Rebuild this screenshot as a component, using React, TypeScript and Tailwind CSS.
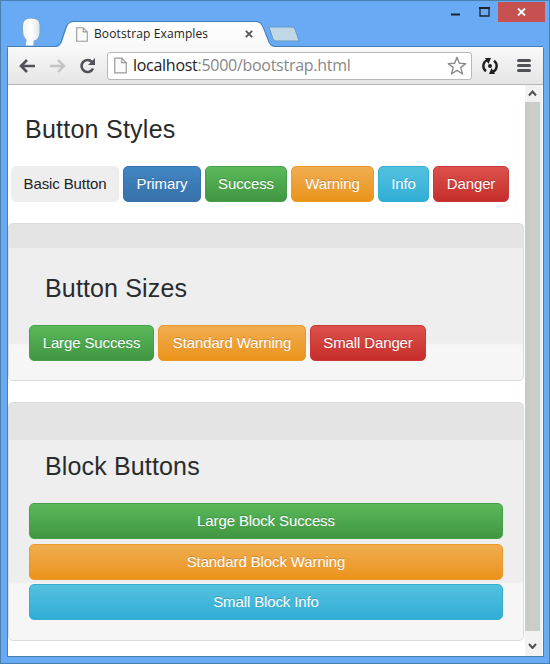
import React from "react";

const variants = {
  basic: "bg-[#eeeeee] text-[#222222] border-[#eeeeee]",
  primary: "bg-linear-to-b from-[#4086c3] to-[#3871a9] text-white border-[#3874ab] [text-shadow:0_-1px_0_#00000030]",
  success: "bg-linear-to-b from-[#5ab95b] to-[#419641] text-white border-[#45a047] [text-shadow:0_-1px_0_#00000030]",
  warning: "bg-linear-to-b from-[#f0ad4e] to-[#eb9316] text-white border-[#ea9a2b] [text-shadow:0_-1px_0_#00000030]",
  info: "bg-linear-to-b from-[#53c1df] to-[#2faed5] text-white border-[#36aed1] [text-shadow:0_-1px_0_#00000030]",
  danger: "bg-linear-to-b from-[#dc504c] to-[#c62d2a] text-white border-[#c93a37] [text-shadow:0_-1px_0_#00000030]",
};

function Button({ kind, width, children }: { kind: keyof typeof variants; width: string; children: string }) {
  return (
    <button className={`h-9 shrink-0 whitespace-nowrap rounded-[5px] border text-[15px] leading-[34px] tracking-[-0.12px] ${variants[kind]} ${width}`}>
      {children}
    </button>
  );
}

function PageIcon({ className }: { className: string }) {
  return (
    <svg className={className} viewBox="0 0 12 15" fill="#fafafa" stroke="#999" strokeWidth="1.1">
      <path d="M.7.7h6.5l4.1 4.2v9.4H.7zM7.2.7v4.2h4.1" />
    </svg>
  );
}

function TitleBar() {
  return (
    <header className="relative flex h-[47px] shrink-0 items-start">
      <svg className="absolute inset-0" width="550" height="47" viewBox="0 0 550 47">
        <defs>
          <linearGradient id="tab" x2="0" y2="1"><stop stopColor="#fff" /><stop offset="1" stopColor="#f8f8f8" /></linearGradient>
          <linearGradient id="head" x2="1"><stop stopColor="#f0f5f3" /><stop offset=".5" stopColor="#fff" /><stop offset="1" stopColor="#dce5e7" /></linearGradient>
        </defs>
        <path d="M25 46L26 40Q22 36 22.500 30V25Q23 18 31 18Q40 18 40 25V33Q39 40 34 41V46z" fill="url(#head)" stroke="#76a5cd" />
        <path d="M7 47H56Q60 47 62 42L67 27Q69 22 73 22H256Q261 22 263 27L269 43Q271 47 275 47z" fill="url(#tab)" />
        <path d="M7 46.5H55Q59 46 61 42L66 27Q68 22 73 21.500H257Q261 22 263 27L269 42Q270 46 275 46.500H543" fill="none" stroke="#437fb6" />
        <path d="M269 27H291Q294 27 295 29L299 41H276Q274 41 273 39z" fill="#c0d7e6" stroke="#6599c7" />
      </svg>
      <div className="relative ml-[76px] mt-[24px] flex h-5 w-[180px] items-center">
        <PageIcon className="h-[15px] w-3" />
        <span className="ml-[6px] w-[118px] whitespace-nowrap font-['Open_Sans',sans-serif] text-[12px] tracking-[0.12px] text-[#222]">Bootstrap Examples</span>
        <svg className="ml-auto mr-[3px]" width="8" height="8" viewBox="0 0 8 8" stroke="#555" strokeWidth="1.8"><path d="M.8.8l6.4 6.400M7.200.8L.8 7.200" /></svg>
      </div>
      <div className="relative ml-auto mr-[5px] mt-[2px] flex h-5 items-center">
        <svg width="10" height="20" className="mr-[18px]"><path d="M0 12.500H9" stroke="#20242c" strokeWidth="2" /></svg>
        <svg width="11" height="20" className="mr-[8px]"><path d="M1 6h9v8H1z" fill="none" stroke="#20242c" strokeWidth="1.300" /><path d="M0 6h11" stroke="#20242c" strokeWidth="2" /></svg>
        <div className="flex h-5 w-[47px] items-center justify-center bg-[#c75050]">
          <svg width="9" height="8" viewBox="0 0 9 8" stroke="white" strokeWidth="1.800"><path d="M1 .5l7 7M8 .5l-7 7" /></svg>
        </div>
      </div>
    </header>
  );
}

function Toolbar() {
  return (
    <nav className="flex h-[38px] shrink-0 items-center border-b border-[#b4b8bc] bg-linear-to-b from-[#f9f9f9] to-[#e5e5e5]">
      <svg className="ml-[11px] shrink-0" width="17" height="14" viewBox="0 0 17 14" fill="none" stroke="#51515a" strokeWidth="2.6"><path d="M16 7H2M8 1L2 7l6 6" /></svg>
      <svg className="ml-[13px] shrink-0" width="17" height="14" viewBox="0 0 17 14" fill="none" stroke="#c3c3c3" strokeWidth="2.4"><path d="M1 7h14M9 1l6 6-6 6" /></svg>
      <svg className="ml-[13px] shrink-0" width="17" height="16" viewBox="0 0 17 16"><path d="M13 4A6 6 0 1 0 14 10.500" fill="none" stroke="#51515a" strokeWidth="2.600" /><path d="M16 0v7H9z" fill="#51515a" /></svg>
      <div className="ml-[11px] flex h-7 w-[365px] shrink-0 items-center rounded-[3px] border border-[#b8b8b8] bg-white pl-[6px] pr-1">
        <PageIcon className="h-[17px] w-[13px] shrink-0" />
        <span className="relative -top-px ml-[6px] w-[220px] whitespace-nowrap font-['Open_Sans',sans-serif] text-[16px] tracking-[-0.28px] text-[#888]"><span className="text-[#202124]">localhost</span>:5000/bootstrap.html</span>
        <svg className="ml-auto shrink-0" width="20" height="20" viewBox="0 0 20 20" fill="#fff" stroke="#8c8c8c" strokeWidth="1.400" strokeLinejoin="round"><path d="M10 1.300l2.300 5.900 6.400.4-5 4 1.900 6.400-5.600-3.600L4.400 18l1.900-6.400-5-4 6.400-.4z" /></svg>
      </div>
      <svg className="ml-[9px] shrink-0" width="18" height="18" viewBox="0 0 18 18" fill="none" stroke="#202020" strokeWidth="2.400"><path d="M6.500 3A6.400 6.400 0 0 0 5 14.200M11.500 15A6.400 6.400 0 0 0 13 3.800" /><path d="M4 1h6L7.500 7zM14 17H8l2.500-6z" fill="#202020" stroke="none" /><circle cx="9" cy="9" r="2" fill="#202020" stroke="none" /></svg>
      <div className="ml-[18px] flex w-[14px] shrink-0 flex-col gap-[2px]">
        <i className="h-[3px] rounded-sm bg-[#505057]" /><i className="h-[3px] rounded-sm bg-[#505057]" /><i className="h-[3px] rounded-sm bg-[#505057]" />
      </div>
    </nav>
  );
}

function Scrollbar() {
  return (
    <aside className="flex w-[17px] shrink-0 flex-col items-center bg-[#f2f2f2] pr-[2px]">
      <svg className="mt-[5px] mb-[5px]" width="9" height="7" viewBox="0 0 9 7" fill="none" stroke="#50504d" strokeWidth="2"><path d="M1 5.500l3.500-4L8 5.500" /></svg>
      <div className="w-[15px] flex-1 border-r border-[#d7c7bd] bg-[linear-gradient(90deg,#c5cccb_0_5px,#d1cdc5_5px_9px,#c6cecc_9px)]" />
      <svg className="mt-[12px] mb-[7px]" width="9" height="6" viewBox="0 0 9 6" fill="none" stroke="#50504d" strokeWidth="2"><path d="M1 1l3.500 4L8 1" /></svg>
    </aside>
  );
}

export default function App() {
  return (
    <div className="flex h-[664px] w-[550px] flex-col overflow-hidden border border-[#477fae] bg-[#69aaf5] font-['Liberation_Sans',Arial,sans-serif]">
      <div className="-ml-px -mt-px w-[550px]"><TitleBar /></div>
      <div className="ml-[6px] flex h-[610px] w-[537px] shrink-0 flex-col rounded-t-[2px] border-x border-b border-[#477fae] bg-white">
        <Toolbar />
        <div className="flex min-h-0 flex-1">
          <main className="w-[517px] shrink-0">
            <h2 className="ml-[17px] mt-[28px] h-[53px] whitespace-nowrap text-[25px] leading-[32px] tracking-[0.25px] text-[#292b2d]">Button Styles</h2>
            <div className="ml-[3px] flex gap-1">
              <Button kind="basic" width="w-[108px]">Basic Button</Button>
              <Button kind="primary" width="w-[78px]">Primary</Button>
              <Button kind="success" width="w-[82px]">Success</Button>
              <Button kind="warning" width="w-[83px]">Warning</Button>
              <Button kind="info" width="w-[51px]">Info</Button>
              <Button kind="danger" width="w-[76px]">Danger</Button>
            </div>
            <section className="mt-[21px] h-[158px] w-[516px] rounded-[5px] border border-[#dcdcdc] bg-[linear-gradient(#e4e4e4_0_24px,#eeeeee_24px_119px,#f6f6f6_121px)] px-5">
              <h2 className="ml-4 mt-[48px] h-[53px] whitespace-nowrap text-[25px] leading-[32px] tracking-[0.15px] text-[#292b2d]">Button Sizes</h2>
              <div className="flex gap-1">
                <Button kind="success" width="w-[125px]">Large Success</Button>
                <Button kind="warning" width="w-[148px]">Standard Warning</Button>
                <Button kind="danger" width="w-[116px]">Small Danger</Button>
              </div>
            </section>
            <section className="mt-[21px] h-[239px] w-[516px] rounded-[5px] border border-[#dcdcdc] bg-[linear-gradient(#e4e4e4_0_37px,#eeeeee_37px_179px,#f6f6f6_181px)] px-5">
              <h2 className="ml-4 mt-[47px] h-[53px] whitespace-nowrap text-[25px] leading-[32px] tracking-[0.15px] text-[#292b2d]">Block Buttons</h2>
              <div className="flex flex-col gap-[4.5px]">
                <Button kind="success" width="w-[474px]">Large Block Success</Button>
                <Button kind="warning" width="w-[474px]">Standard Block Warning</Button>
                <Button kind="info" width="w-[474px]">Small Block Info</Button>
              </div>
            </section>
          </main>
          <Scrollbar />
        </div>
      </div>
    </div>
  );
}
